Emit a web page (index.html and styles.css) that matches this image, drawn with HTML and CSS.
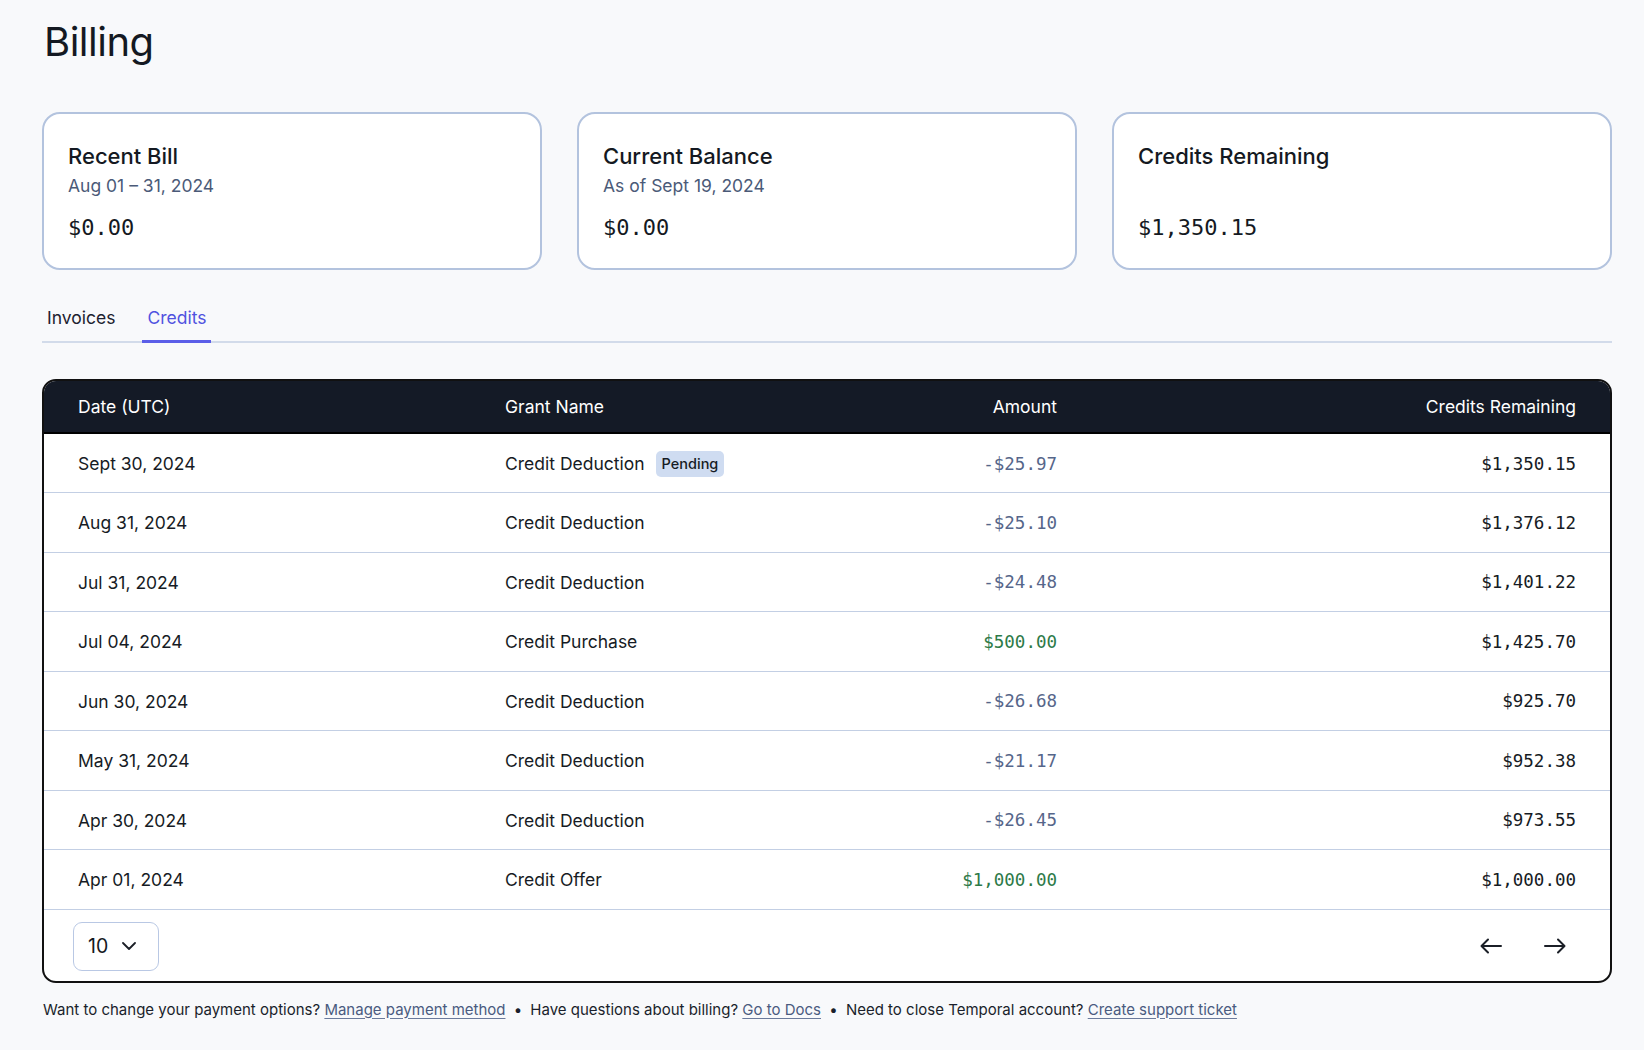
FILE: index.html
```html
<!DOCTYPE html>
<html lang="en">
<head>
<meta charset="utf-8">
<title>Billing</title>
<link rel="stylesheet" href="styles.css">
</head>
<body>
<main class="page">
  <h1 class="page-title">Billing</h1>

  <section class="cards">
    <div class="card">
      <div class="card-title">Recent Bill</div>
      <div class="card-sub">Aug 01 – 31, 2024</div>
      <div class="card-amount">$0.00</div>
    </div>
    <div class="card">
      <div class="card-title">Current Balance</div>
      <div class="card-sub">As of Sept 19, 2024</div>
      <div class="card-amount">$0.00</div>
    </div>
    <div class="card">
      <div class="card-title">Credits Remaining</div>
      <div class="card-sub"></div>
      <div class="card-amount">$1,350.15</div>
    </div>
  </section>

  <nav class="tabs">
    <a class="tab">Invoices</a>
    <a class="tab tab-active">Credits</a>
  </nav>

  <div class="table-wrap">
    <table class="credits-table">
      <colgroup>
        <col class="c-date">
        <col class="c-grant">
        <col class="c-amount">
        <col class="c-remaining">
      </colgroup>
      <thead>
        <tr>
          <th class="left">Date (UTC)</th>
          <th class="left">Grant Name</th>
          <th class="right">Amount</th>
          <th class="right">Credits Remaining</th>
        </tr>
      </thead>
      <tbody>
        <tr>
          <td>Sept 30, 2024</td>
          <td><span class="grant">Credit Deduction</span><span class="badge">Pending</span></td>
          <td class="right mono neg">-$25.97</td>
          <td class="right mono">$1,350.15</td>
        </tr>
        <tr>
          <td>Aug 31, 2024</td>
          <td>Credit Deduction</td>
          <td class="right mono neg">-$25.10</td>
          <td class="right mono">$1,376.12</td>
        </tr>
        <tr>
          <td>Jul 31, 2024</td>
          <td>Credit Deduction</td>
          <td class="right mono neg">-$24.48</td>
          <td class="right mono">$1,401.22</td>
        </tr>
        <tr>
          <td>Jul 04, 2024</td>
          <td>Credit Purchase</td>
          <td class="right mono pos">$500.00</td>
          <td class="right mono">$1,425.70</td>
        </tr>
        <tr>
          <td>Jun 30, 2024</td>
          <td>Credit Deduction</td>
          <td class="right mono neg">-$26.68</td>
          <td class="right mono">$925.70</td>
        </tr>
        <tr>
          <td>May 31, 2024</td>
          <td>Credit Deduction</td>
          <td class="right mono neg">-$21.17</td>
          <td class="right mono">$952.38</td>
        </tr>
        <tr>
          <td>Apr 30, 2024</td>
          <td>Credit Deduction</td>
          <td class="right mono neg">-$26.45</td>
          <td class="right mono">$973.55</td>
        </tr>
        <tr>
          <td>Apr 01, 2024</td>
          <td>Credit Offer</td>
          <td class="right mono pos">$1,000.00</td>
          <td class="right mono">$1,000.00</td>
        </tr>
      </tbody>
    </table>
    <div class="table-footer">
      <button class="page-size">
        <span>10</span>
        <svg class="chev" width="14" height="8" viewBox="0 0 14 8" fill="none"><path d="M1 1l6 6 6-6" stroke="#1b1f27" stroke-width="1.8" stroke-linecap="round" stroke-linejoin="round"/></svg>
      </button>
      <div class="pager">
        <button class="pager-btn" aria-label="Previous">
          <svg width="22" height="16" viewBox="0 0 22 16" fill="none"><path d="M21 8H2M8 1.5L1.5 8 8 14.5" stroke="#1b1f27" stroke-width="2" stroke-linecap="round" stroke-linejoin="round"/></svg>
        </button>
        <button class="pager-btn" aria-label="Next">
          <svg width="22" height="16" viewBox="0 0 22 16" fill="none"><path d="M1 8h19M14 1.5L20.5 8 14 14.5" stroke="#1b1f27" stroke-width="2" stroke-linecap="round" stroke-linejoin="round"/></svg>
        </button>
      </div>
    </div>
  </div>

  <p class="help">
    Want to change your payment options? <a class="link">Manage payment method</a>
    <span class="sep">•</span>
    Have questions about billing? <a class="link">Go to Docs</a>
    <span class="sep">•</span>
    Need to close Temporal account? <a class="link">Create support ticket</a>
  </p>
</main>
</body>
</html>
```
FILE: styles.css
```css
* { box-sizing: border-box; }

html, body {
  margin: 0;
  padding: 0;
  background: #f8f9fb;
}

body {
  font-family: Inter, "Noto Sans", "Liberation Sans", sans-serif;
  color: #141922;
}

.page {
  padding: 0 32px 0 42px;
}

.page-title {
  margin: 0;
  padding-top: 18px;
  padding-left: 2px;
  font-size: 40px;
  line-height: 48px;
  font-weight: 400;
  letter-spacing: -0.5px;
  color: #141922;
}

.cards {
  margin-top: 46px;
  display: grid;
  grid-template-columns: repeat(3, 1fr);
  gap: 35px;
}

.card {
  background: #fff;
  border: 2px solid #b3c3de;
  border-radius: 18px;
  padding: 28px 24px 26px 24px;
  height: 158px;
}

.card-title {
  font-size: 22px;
  line-height: 28px;
  font-weight: 500;
  color: #141922;
}

.card-sub {
  font-size: 17.5px;
  line-height: 24px;
  color: #4b5a78;
  margin-top: 4px;
  min-height: 24px;
}

.card-amount {
  margin-top: 16px;
  font-family: "DejaVu Sans Mono", "Liberation Mono", monospace;
  font-size: 22px;
  line-height: 28px;
  color: #141922;
}

.tabs {
  margin-top: 28px;
  display: flex;
  gap: 22px;
  border-bottom: 2px solid #d2dbea;
}

.tab {
  padding: 8px 5px 10px 5px;
  font-size: 17.5px;
  line-height: 24px;
  color: #1d2230;
  border-bottom: 3px solid transparent;
  margin-bottom: -2px;
}

.tab-active {
  color: #5052e0;
  border-bottom-color: #5b5ee8;
}

.table-wrap {
  margin-top: 36px;
  border: 2px solid #111;
  border-radius: 14px;
  overflow: hidden;
  background: #fff;
}

.credits-table {
  width: 100%;
  border-collapse: collapse;
  table-layout: fixed;
}

.c-date { width: 427px; }
.c-grant { width: 400px; }
.c-amount { width: 220px; }

.credits-table th {
  background: #141a26;
  color: #fff;
  font-weight: 400;
  font-size: 17.5px;
  height: 52px;
  padding: 0 34px;
  border-bottom: 2px solid #000;
}

.credits-table td {
  font-size: 17.5px;
  height: 59.5px;
  padding: 1px 34px 0 34px;
  border-bottom: 1px solid #c3cfe4;
  color: #161b24;
  white-space: nowrap;
}

.left { text-align: left; }
.right { text-align: right; }

.credits-table .mono {
  font-family: "DejaVu Sans Mono", "Liberation Mono", monospace;
  font-size: 17.5px;
}

.credits-table .neg { color: #56668a; }
.credits-table .pos { color: #2d7a48; }

.badge {
  display: inline-block;
  margin-left: 11px;
  padding: 3px 6px;
  font-size: 14.5px;
  line-height: 20px;
  font-weight: 500;
  background: #cfdcf1;
  color: #161b24;
  border-radius: 5px;
  vertical-align: 1px;
}

.table-footer {
  display: flex;
  align-items: center;
  justify-content: space-between;
  padding: 12px 34px 10px 29px;
}

.page-size {
  display: flex;
  align-items: center;
  gap: 14px;
  width: 86px;
  height: 49px;
  padding: 0 0 0 14px;
  border: 1.5px solid #b9c8e4;
  border-radius: 9px;
  background: #fff;
  font-family: Inter, "Noto Sans", sans-serif;
  font-size: 19.5px;
  color: #141922;
}

.pager {
  display: flex;
  gap: 42px;
  padding-right: 10px;
}

.pager-btn {
  border: 0;
  background: transparent;
  padding: 0;
  display: flex;
  align-items: center;
}

.help {
  margin: 17px 0 0 1px;
  font-size: 15px;
  line-height: 20px;
  color: #1a1f2b;
}

.link {
  color: #4a5b80;
  text-decoration: underline;
  text-underline-offset: 3px;
  text-decoration-color: #6a7a9c;
}

.sep {
  margin: 0 4px;
}
```
